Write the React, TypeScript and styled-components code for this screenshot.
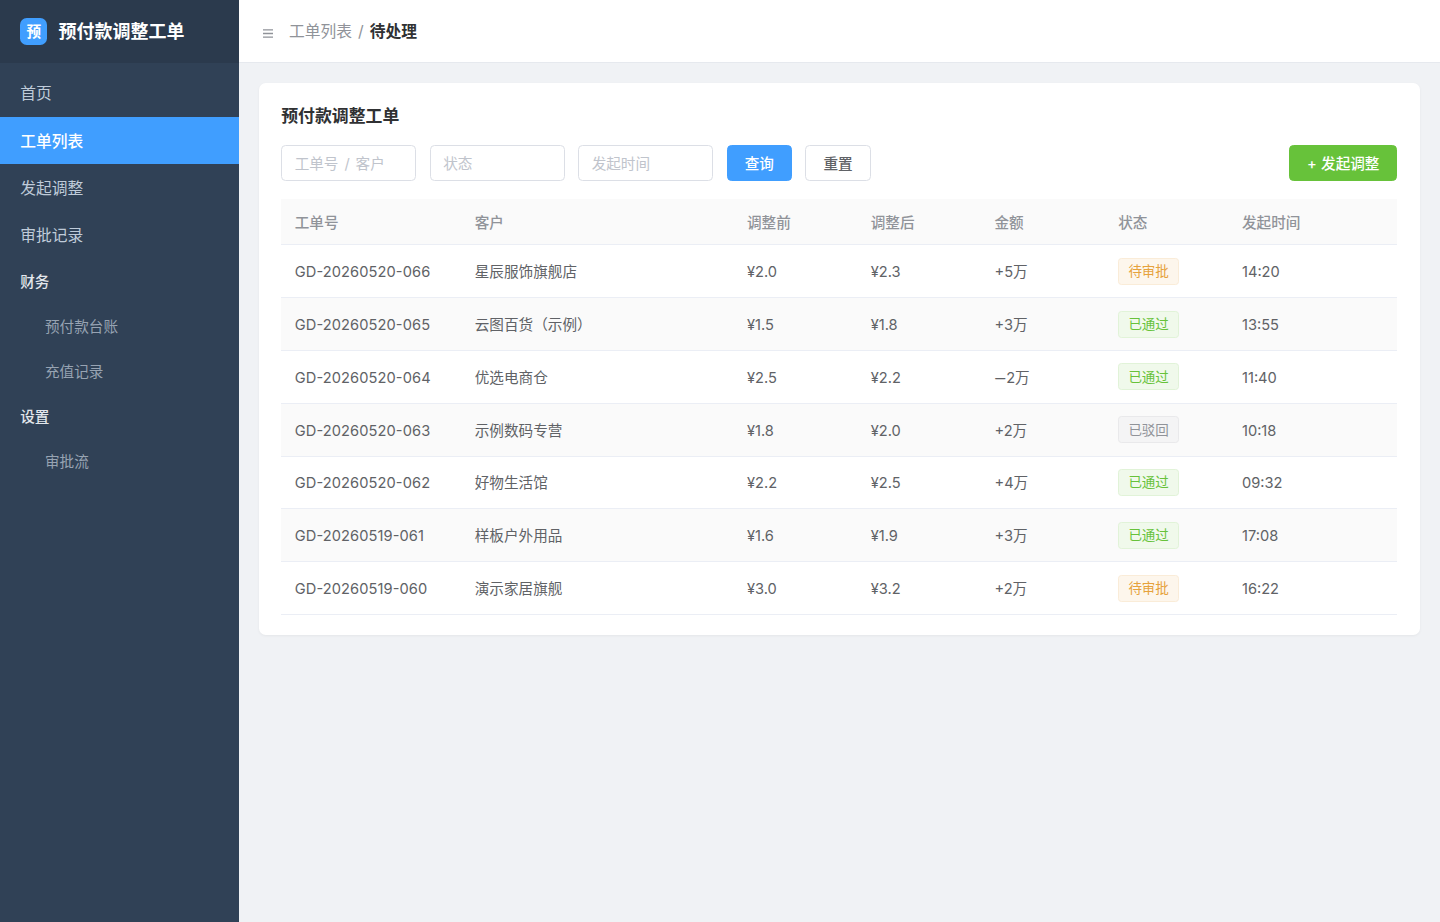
import React from "react";
import styled, { createGlobalStyle, css } from "styled-components";

const GlobalStyle = createGlobalStyle`
  * { box-sizing: border-box; }
  body {
    margin: 0;
    background: #f0f2f5;
    color: #606266;
    font-family: Inter, "Noto Sans CJK SC", sans-serif;
    font-size: 14.625px;
    line-height: 20px;
    -webkit-font-smoothing: antialiased;
  }
`;

const Shell = styled.div`
  display: flex;
  height: 922px;
  overflow: hidden;
`;

const Sidebar = styled.aside`
  flex: 0 0 238.5px;
  background: #304156;
`;

const Brand = styled.div`
  display: flex;
  align-items: center;
  gap: 11.25px;
  height: 63px;
  padding: 0 20.25px;
  background: #2b3a4d;
  color: #fff;
  font-size: 18px;
  font-weight: 700;
  white-space: nowrap;
`;

const Logo = styled.span`
  display: grid;
  place-items: center;
  width: 27px;
  height: 27px;
  border-radius: 6.75px;
  background: #409eff;
  font-size: 14.625px;
`;

const Menu = styled.nav`
  padding: 6.75px 0;
`;

type Level = "item" | "group" | "sub";

const MenuEntry = styled.a<{ $level: Level; $active?: boolean }>`
  display: flex;
  align-items: center;
  height: 47.25px;
  padding: 2.2px 20.25px 0;
  color: #bfcbd9;
  font-size: 15.75px;
  ${(p) =>
    p.$level === "group" &&
    css`
      height: 45px;
      padding-top: 1.6px;
      color: #e3e7ec;
      font-size: 14.625px;
      font-weight: 500;
    `}
  ${(p) =>
    p.$level === "sub" &&
    css`
      height: 45px;
      padding-top: 1.6px;
      padding-left: 45px;
      color: #97a3b2;
      font-size: 14.625px;
    `}
  ${(p) =>
    p.$active &&
    css`
      background: #409eff;
      color: #fff;
      font-weight: 500;
    `}
`;

const Main = styled.div`
  flex: 1;
  min-width: 0;
`;

const TopBar = styled.header`
  display: flex;
  align-items: center;
  height: 63px;
  padding: 0 24.5px;
  border-bottom: 1px solid #e6e9ee;
  background: #fff;
  color: #909399;
  font-size: 15.75px;
`;

const Hamburger = styled.svg`
  width: 10px;
  height: 9px;
  margin: 4px 16px 0 0;
`;

const Crumbs = styled.div`
  display: flex;
  gap: 6px;
  padding-top: 2px;
  strong {
    color: #303133;
    font-weight: 700;
  }
`;

const Card = styled.section`
  margin: 20.25px;
  padding: 22.5px 22.5px 20.25px;
  border-radius: 6.75px;
  background: #fff;
  box-shadow: 0 1px 3px rgba(0, 0, 0, 0.05);
`;

const Title = styled.h1`
  margin: 0 0 18px;
  color: #303133;
  font-size: 16.875px;
  font-weight: 700;
  line-height: 21.5px;
`;

const Filters = styled.div`
  display: flex;
  gap: 13.5px;
  margin-bottom: 18px;
`;

const Field = styled.div`
  display: flex;
  align-items: center;
  width: 135px;
  height: 36px;
  padding: 1.6px 12.4px 0;
  border: 1px solid #dcdfe6;
  border-radius: 4.5px;
  color: #c0c4cc;
  word-spacing: 1.8px;
`;

const Button = styled.button<{ $tone?: string }>`
  height: 36px;
  padding: 1.6px 17px 0;
  border: 1px solid ${(p) => p.$tone ?? "#dcdfe6"};
  border-radius: 4.5px;
  background: ${(p) => p.$tone ?? "#fff"};
  color: ${(p) => (p.$tone ? "#fff" : "#606266")};
  font: inherit;
  font-weight: 500;
  white-space: nowrap;
`;

const CreateButton = styled(Button)`
  width: 108px;
  margin-left: auto;
  padding: 1.6px 0 0;
  word-spacing: 0.4px;
`;

const Row = styled.div<{ $head?: boolean; $striped?: boolean }>`
  display: grid;
  grid-template-columns: 180px 272.25px repeat(4, 123.75px) 1fr;
  align-items: center;
  height: ${(p) => (p.$head ? "46.1px" : "52.8px")};
  border-bottom: 1px solid #ebeef5;
  background: ${(p) => (p.$head || p.$striped ? "#fafafa" : "#fff")};
  color: ${(p) => (p.$head ? "#909399" : "#606266")};
  font-weight: ${(p) => (p.$head ? 500 : 400)};
`;

const Cell = styled.span<{ $flush?: boolean }>`
  padding: ${(p) => (p.$flush ? 0 : "2.1px")} 0 0 13.5px;
  white-space: nowrap;
`;

const OrderNo = styled.span`
  letter-spacing: 0.1px;
  font-feature-settings: "case";
`;

const Minus = styled.span`
  display: inline-block;
  margin: 0 3.2px 0 -1.2px;
  transform: scaleX(1.5);
  transform-origin: left;
`;

const tones = {
  待审批: ["#fdf6ec", "#faecd8", "#e6a23c"],
  已通过: ["#f0f9eb", "#e1f3d8", "#67c23a"],
  已驳回: ["#f4f4f5", "#e9e9eb", "#909399"],
};
type Status = keyof typeof tones;

const Tag = styled.span<{ $status: Status }>`
  display: flex;
  align-items: center;
  justify-content: center;
  width: 60.75px;
  height: 27px;
  border: 1px solid ${(p) => tones[p.$status][1]};
  border-radius: 3.4px;
  background: ${(p) => tones[p.$status][0]};
  color: ${(p) => tones[p.$status][2]};
  font-size: 13.5px;
`;

const menu: { label: string; level: Level; active?: boolean }[] = [
  { label: "首页", level: "item" },
  { label: "工单列表", level: "item", active: true },
  { label: "发起调整", level: "item" },
  { label: "审批记录", level: "item" },
  { label: "财务", level: "group" },
  { label: "预付款台账", level: "sub" },
  { label: "充值记录", level: "sub" },
  { label: "设置", level: "group" },
  { label: "审批流", level: "sub" },
];

const columns = ["工单号", "客户", "调整前", "调整后", "金额", "状态", "发起时间"];

const orders: [string, string, string, string, string, Status, string][] = [
  ["GD-20260520-066", "星辰服饰旗舰店", "¥2.0", "¥2.3", "+5万", "待审批", "14:20"],
  ["GD-20260520-065", "云图百货（示例）", "¥1.5", "¥1.8", "+3万", "已通过", "13:55"],
  ["GD-20260520-064", "优选电商仓", "¥2.5", "¥2.2", "−2万", "已通过", "11:40"],
  ["GD-20260520-063", "示例数码专营", "¥1.8", "¥2.0", "+2万", "已驳回", "10:18"],
  ["GD-20260520-062", "好物生活馆", "¥2.2", "¥2.5", "+4万", "已通过", "09:32"],
  ["GD-20260519-061", "样板户外用品", "¥1.6", "¥1.9", "+3万", "已通过", "17:08"],
  ["GD-20260519-060", "演示家居旗舰", "¥3.0", "¥3.2", "+2万", "待审批", "16:22"],
];

function CellContent({ column, value }: { column: number; value: string }) {
  if (column === 0) return <OrderNo>{value}</OrderNo>;
  if (column === 5) return <Tag $status={value as Status}>{value}</Tag>;
  if (value.startsWith("−"))
    return (
      <>
        <Minus>−</Minus>
        {value.slice(1)}
      </>
    );
  return <>{value}</>;
}

export default function App() {
  return (
    <>
      <GlobalStyle />
      <Shell>
        <Sidebar>
          <Brand>
            <Logo>预</Logo>
            预付款调整工单
          </Brand>
          <Menu>
            {menu.map((m) => (
              <MenuEntry key={m.label} $level={m.level} $active={m.active}>
                {m.label}
              </MenuEntry>
            ))}
          </Menu>
        </Sidebar>
        <Main>
          <TopBar>
            <Hamburger viewBox="0 0 10 9" stroke="#909399" strokeWidth="1.4">
              <path d="M0 .9h10M0 4.5h10M0 8.1h10" />
            </Hamburger>
            <Crumbs>
              <span>工单列表</span>
              <span>/</span>
              <strong>待处理</strong>
            </Crumbs>
          </TopBar>
          <Card>
            <Title>预付款调整工单</Title>
            <Filters>
              <Field>工单号 / 客户</Field>
              <Field>状态</Field>
              <Field>发起时间</Field>
              <Button $tone="#409eff">查询</Button>
              <Button>重置</Button>
              <CreateButton $tone="#67c23a">+ 发起调整</CreateButton>
            </Filters>
            <Row $head>
              {columns.map((c) => (
                <Cell key={c}>{c}</Cell>
              ))}
            </Row>
            {orders.map((order, i) => (
              <Row key={order[0]} $striped={i % 2 === 1}>
                {order.map((value, c) => (
                  <Cell key={c} $flush={c === 5}>
                    <CellContent column={c} value={value} />
                  </Cell>
                ))}
              </Row>
            ))}
          </Card>
        </Main>
      </Shell>
    </>
  );
}
